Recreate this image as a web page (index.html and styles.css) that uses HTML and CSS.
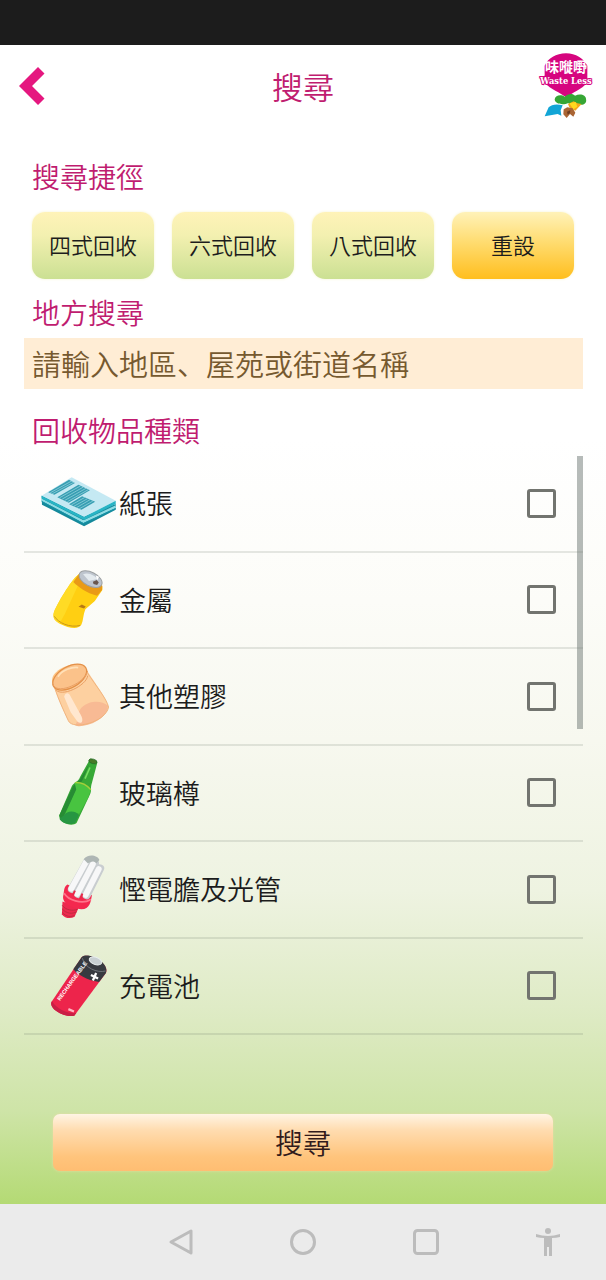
FILE: index.html
```html
<!DOCTYPE html>
<html lang="zh-Hant">
<head>
<meta charset="utf-8">
<meta name="viewport" content="width=device-width, initial-scale=1">
<title>搜尋</title>
<link rel="stylesheet" href="styles.css">
</head>
<body>
<div class="status-bar"></div>
<div class="app">
  <header class="header">
    <button class="back" type="button" aria-label="返回">
      <svg width="26" height="40" viewBox="0 0 26 40"><path d="M19 1 25.500 7.500 13 20 25.500 32.500 19 39 0 20Z" fill="#e5177f"/></svg>
    </button>
    <h1 class="title">搜尋</h1>
    <svg class="logo" width="60" height="70" viewBox="48 21 180 210">
      <path d="M138 28C108 28 84 43 74 65V116C92 136 120 145 139 160C158 145 184 136 202 116V65C190 43 168 28 138 28Z" fill="#d6057f"/>
      <path d="M104 166C106 153 123 150 134 158C145 147 159 148 165 155C181 147 198 153 198 165C202 179 187 186 176 181C163 190 150 185 145 177C132 184 105 182 104 166Z" fill="#36a635"/>
      <path d="M144 180 161 172 172 178 185 180 166 200 148 190Z" fill="#f5a81c"/>
      <path d="M148 178 167 174 172 188 160 196Z" fill="#ffd91f"/>
      <path d="M74 217 86 190C94 181 111 179 128 184L122 199 124 215 113 210 96 213Z" fill="#12a5d6"/>
      <path d="M131 196 142 190 158 193 166 206 160 218 150 210 140 222 130 211Z" fill="#aa6534"/>
      <path d="M141 203 151 199 150 207 143 212Z" fill="#6e3d22"/>
      <text class="logo-zh" x="138" y="84" text-anchor="middle">味嘥嘢</text>
      <text class="logo-en" x="138" y="119" text-anchor="middle">Waste Less</text>
    </svg>
  </header>

  <main class="main">
    <h2 class="heading">搜尋捷徑</h2>
    <div class="shortcuts">
      <button class="chip" type="button">四式回收</button>
      <button class="chip" type="button">六式回收</button>
      <button class="chip" type="button">八式回收</button>
      <button class="chip chip-reset" type="button">重設</button>
    </div>
    <h2 class="heading"><label for="place">地方搜尋</label></h2>
    <input class="place" id="place" type="text" lang="zh-Hans" placeholder="請輸入地區、屋苑或街道名稱">
    <h2 class="heading heading-types">回收物品種類</h2>

    <div class="list">
      <label class="row">
        <svg class="icon" viewBox="-18 -27 285 288">
          <path d="M33 95 34 122 163 188 260 138V120L163 158Z" fill="#15899b"/>
          <path d="M33 107 161 174 260 128" fill="none" stroke="#8edce4" stroke-width="7"/>
          <path d="M33 112 161 180 260 134" fill="none" stroke="#1693a8" stroke-width="3"/>
          <path d="M33 95 125 38 260 110 163 160Z" fill="#c5e9f3"/>
          <path d="M33 95 163 160 260 110V120L163 169 33 103Z" fill="#28b4c5"/>
          <path d="M53 84 117 46 135 56 72 92Z" fill="#379eb2"/>
          <path d="M81 99 146 61 181 78 116 116Z" fill="#379eb2"/>
          <path d="M117 121 157 96 197 113 155 138Z" fill="#379eb2"/>
          <path d="M59 86 126 49M65 89 132 53M88 101 153 64M96 105 161 68M104 109 169 72M112 113 176 76M124 123 165 100M132 127 173 104M140 131 181 107M148 135 190 111" stroke="#a6dce6" stroke-width="2"/>
        </svg>
        <span class="name">紙張</span><input class="check" type="checkbox">
      </label>
      <label class="row">
        <svg class="icon" viewBox="-18 -22 285 288">
          <path d="M147 43C128 55 88 120 71 158 64 178 75 188 92 196 117 209 147 213 155 197 161 184 160 166 167 150L196 125 219 91C225 62 166 20 147 43Z" fill="#ffcf12"/>
          <path d="M147 43C128 55 88 120 71 158 66 176 75 187 88 193L104 165 151 63Z" fill="#ffdb25"/>
          <path d="M147 43 130 67C145 82 170 101 203 109L218 91 219 78Z" fill="#e99a16"/>
          <path d="M72 172C84 192 119 208 151 200" fill="none" stroke="#c7961c" stroke-width="3"/>
          <path d="M146 143 156 136 168 142 163 148Z" fill="#b87912"/>
          <ellipse cx="183" cy="58" rx="38" ry="21" transform="rotate(27 183 58)" fill="#bec5ce" stroke="#9da0a2" stroke-width="3"/>
          <path d="M160 43C177 35 198 48 204 58L178 64Z" fill="#e4eaee"/>
          <path d="M190 66 202 61 208 68 203 76 192 73Z" fill="#69564e"/>
          <path d="M199 47 209 51 203 62Z" fill="#fff"/>
        </svg>
        <span class="name">金屬</span><input class="check" type="checkbox">
      </label>
      <label class="row">
        <svg class="icon" viewBox="-18 -18 285 288">
          <path d="M65 80C76 118 96 162 115 202 128 232 230 206 238 160 233 135 198 88 174 51Z" fill="#fdd0a0"/>
          <path d="M147 190C140 150 206 129 236 156 234 204 156 226 136 216Z" fill="#f8ba94"/>
          <path d="M102 128C105 116 116 114 121 126L153 184C164 204 154 214 143 205L122 176Z" fill="#ffe7cf"/>
          <path d="M65 80C61 44 142 13 166 36 187 62 104 124 78 105Z" fill="#ffc583"/>
          <ellipse cx="119" cy="68" rx="57" ry="32" transform="rotate(-30 119 68)" fill="#fbc28a" stroke="#e39149" stroke-width="4"/>
          <path d="M68 90C78 125 168 86 174 49M74 104C91 134 172 93 174 64" fill="none" stroke="#e9a064" stroke-width="3"/>
          <path d="M74 104C84 135 100 170 115 202 128 232 230 206 238 160 233 135 198 93 174 56" fill="none" stroke="#f0b27c" stroke-width="3"/>
          <path d="M83 67C95 47 127 36 145 39" fill="none" stroke="#ffe1b9" stroke-width="5"/>
        </svg>
        <span class="name">其他塑膠</span><input class="check" type="checkbox">
      </label>
      <label class="row">
        <svg class="icon" viewBox="-18 -14 285 288">
          <path d="M178 32 151 80C145 96 137 93 126 108L87 198C84 220 124 236 140 222L180 137C188 122 181 116 187 99L204 36Z" fill="#37a936"/>
          <path d="M180 39 149 90 129 109 87 199 94 214 141 119 158 91Z" fill="#278c34"/>
          <path d="M134 98C150 99 171 108 184 119L176 144 148 194C133 186 111 188 103 199L139 119Z" fill="#48c440"/>
          <path d="M102 198C111 182 140 184 147 199L135 222C117 232 88 217 88 208Z" fill="#279642"/>
          <path d="M136 98C152 97 169 103 184 120" fill="none" stroke="#a3cf3b" stroke-width="4"/>
          <path d="M181 52 166 86" stroke="#78df65" stroke-width="5"/>
          <ellipse cx="190" cy="33" rx="13" ry="7" transform="rotate(16 190 33)" fill="#487b28" stroke="#216d28" stroke-width="2"/>
        </svg>
        <span class="name">玻璃樽</span><input class="check" type="checkbox">
      </label>
      <label class="row">
        <svg class="icon" viewBox="-18 -18 285 288">
          <path d="M97 164 95 203C103 215 120 219 134 211L147 182Z" fill="#ed294e"/>
          <path d="M96 176C107 191 128 194 143 188M96 187C109 202 127 203 140 196M96 198C109 212 125 213 134 206" fill="none" stroke="#bd2b40" stroke-width="3"/>
          <path d="M112 112C101 119 102 132 100 143 92 168 121 184 155 188 181 187 183 167 187 145Z" fill="#f4284e"/>
          <path d="M102 139C113 159 156 175 184 158" fill="none" stroke="#ff758b" stroke-width="5"/>
          <path d="M126 126 173 42M145 141 196 47M171 145 212 63" stroke="#c9cdd0" stroke-width="25" stroke-linecap="round"/>
          <path d="M124 125 169 43M142 141 190 50M168 144 208 65" stroke="#f7f7f8" stroke-width="18" stroke-linecap="round"/>
          <path d="M162 35C172 18 204 20 210 37L201 47C192 37 181 43 175 48Z" fill="#aeb6b4"/>
          <path d="M129 145 135 131M151 155 158 140" stroke="#e82849" stroke-width="6"/>
        </svg>
        <span class="name">慳電膽及光管</span><input class="check" type="checkbox">
      </label>
      <label class="row">
        <svg class="icon" viewBox="-18 -20 285 288">
          <path d="M156 35 63 173C55 194 103 222 133 215L230 84C243 55 177 20 156 35Z" fill="#ed244b"/>
          <path d="M63 173C55 194 103 222 133 215L139 207C111 209 80 196 65 171Z" fill="#c91f46"/>
          <path d="M156 35 130 73C144 89 169 106 209 112L230 84C241 53 179 19 156 35Z" fill="#373a40"/>
          <path d="M158 39C164 68 203 85 229 78" fill="none" stroke="#70757a" stroke-width="3"/>
          <ellipse cx="198" cy="47" rx="20" ry="11" transform="rotate(20 198 47)" fill="#c8cfd2" stroke="#e8eeee" stroke-width="3"/>
          <path d="M184 90 206 101M200 84 190 107" stroke="#fff" stroke-width="7"/>
          <path d="M115 195 132 202" stroke="#ffb7c4" stroke-width="7"/>
          <text class="battery-text" transform="translate(89 170) rotate(-54)">RECHARGEABLE</text>
        </svg>
        <span class="name">充電池</span><input class="check" type="checkbox">
      </label>
      <div class="scrollbar"></div>
    </div>
    <button class="search" type="submit">搜尋</button>
  </main>
</div>
<nav class="nav">
  <button class="nav-button" type="button" aria-label="返回"><svg width="26" height="28" viewBox="0 0 26 28"><path d="M23 3v22L3 14Z"/></svg></button>
  <button class="nav-button" type="button" aria-label="主頁"><svg width="26" height="28" viewBox="0 0 26 28"><circle cx="13" cy="14" r="11.500"/></svg></button>
  <button class="nav-button" type="button" aria-label="最近使用"><svg width="26" height="28" viewBox="0 0 26 28"><rect x="1.500" y="2.500" width="23" height="23" rx="3"/></svg></button>
  <button class="nav-button" type="button" aria-label="無障礙"><svg width="26" height="28" viewBox="0 0 26 28"><g class="solid"><circle cx="13" cy="3" r="3"/><path d="M1 6Q13 10 25 6V9Q21 10 17 10V28H14V19H12V28H9V10Q5 10 1 9Z"/></g></svg></button>
</nav>
</body>
</html>
```
FILE: styles.css
```css
* {
  box-sizing: border-box;
}

body {
  margin: 0;
  min-height: 100vh;
  display: flex;
  flex-direction: column;
  font-family: "Noto Sans CJK TC", "Noto Sans", sans-serif;
  font-weight: 350;
  color: #1c1c1c;
}

button,
input {
  font: inherit;
  color: inherit;
  border: 0;
  padding: 0;
  margin: 0;
}

.status-bar {
  height: 45px;
  background: #1c1c1c;
}

.app {
  flex: 1;
  background: linear-gradient(#fff 0%, #fff 34%, #fcfcf8 48%, #f7f8ef 60%, #eef3e1 73%, #dfebc6 83%, #cee4a7 92%, #b4da74 100%);
}

.header {
  height: 82px;
  padding: 0 10px 0 19px;
  display: grid;
  grid-template-columns: 51px 1fr 60px;
  align-items: center;
}

.back {
  display: flex;
  background: none;
}

.title {
  margin: 0;
  font-size: 31px;
  line-height: 40px;
  font-weight: 350;
  text-align: center;
  color: #c01c70;
}

.logo-zh {
  font-size: 42px;
  font-weight: 700;
  fill: #fff;
}

.logo-en {
  font-family: "DejaVu Serif", serif;
  font-size: 25px;
  font-weight: 700;
  fill: #fff;
  stroke: #d6057f;
  stroke-width: 6px;
  paint-order: stroke;
}

.main {
  padding: 33px 23px 33px 24px;
  display: flex;
  flex-direction: column;
}

.heading {
  margin: 0 8px 4px;
  font-size: 28px;
  line-height: 32px;
  font-weight: 350;
  color: #c01c70;
}

.heading-types {
  margin-top: 25px;
  margin-bottom: 10px;
}

.shortcuts {
  margin: 16px 9px 17px 8px;
  display: grid;
  grid-template-columns: repeat(4, 1fr);
  gap: 18px;
}

.chip {
  height: 67px;
  padding-bottom: 4px;
  border-radius: 13px;
  font-size: 22px;
  background: linear-gradient(#fff3b8, #f3f0b0 35%, #cbe093);
  box-shadow: 0 0 3px #f6f3cf;
}

.chip-reset {
  background: linear-gradient(#fff2b8, #ffdc70 45%, #ffbe1e);
}

.place {
  width: 100%;
  height: 51px;
  margin-top: 6px;
  padding: 0 8px 2px;
  font-family: "Noto Sans CJK SC", sans-serif;
  font-size: 29px;
  border-radius: 0;
  background: #ffedd5;
}

.place::placeholder {
  color: #76592f;
  opacity: 1;
}

.list {
  position: relative;
  min-height: 579px;
  display: flex;
  flex-direction: column;
}

.row {
  flex: 1;
  display: flex;
  align-items: center;
  padding-right: 27px;
  border-bottom: 2px solid rgba(100, 110, 100, 0.16);
}

.icon {
  width: 95px;
  height: 94px;
  flex: none;
}

.name {
  flex: 1;
  font-size: 27px;
  line-height: 36px;
}

.check {
  appearance: none;
  width: 29px;
  height: 29px;
  border: 3px solid #72746f;
  border-radius: 3px;
}

.check:checked {
  background: #72746f;
}

.battery-text {
  font-family: "Liberation Sans", sans-serif;
  font-size: 17px;
  font-weight: 700;
  fill: #fff;
}

.scrollbar {
  position: absolute;
  top: 0;
  right: 0;
  width: 6px;
  height: 273px;
  background: rgba(110, 120, 115, 0.5);
}

.search {
  height: 57px;
  margin: 79px 30px 0 29px;
  padding-bottom: 2px;
  border-radius: 7px;
  font-size: 28px;
  color: #321b1b;
  background: linear-gradient(#fff4e4, #ffdcb0 28%, #ffc47c 75%, #ffbd72);
  box-shadow: 0 0 3px #e8dca5;
}

.nav {
  height: 76px;
  padding: 0 45px 0 168px;
  display: flex;
  justify-content: space-between;
  align-items: center;
  background: #ebebeb;
}

.nav-button {
  display: flex;
  background: none;
}

.nav-button svg {
  fill: none;
  stroke: #bcbcbc;
  stroke-width: 3px;
  stroke-linejoin: round;
}

.nav-button .solid {
  fill: #bcbcbc;
  stroke: none;
}
```
